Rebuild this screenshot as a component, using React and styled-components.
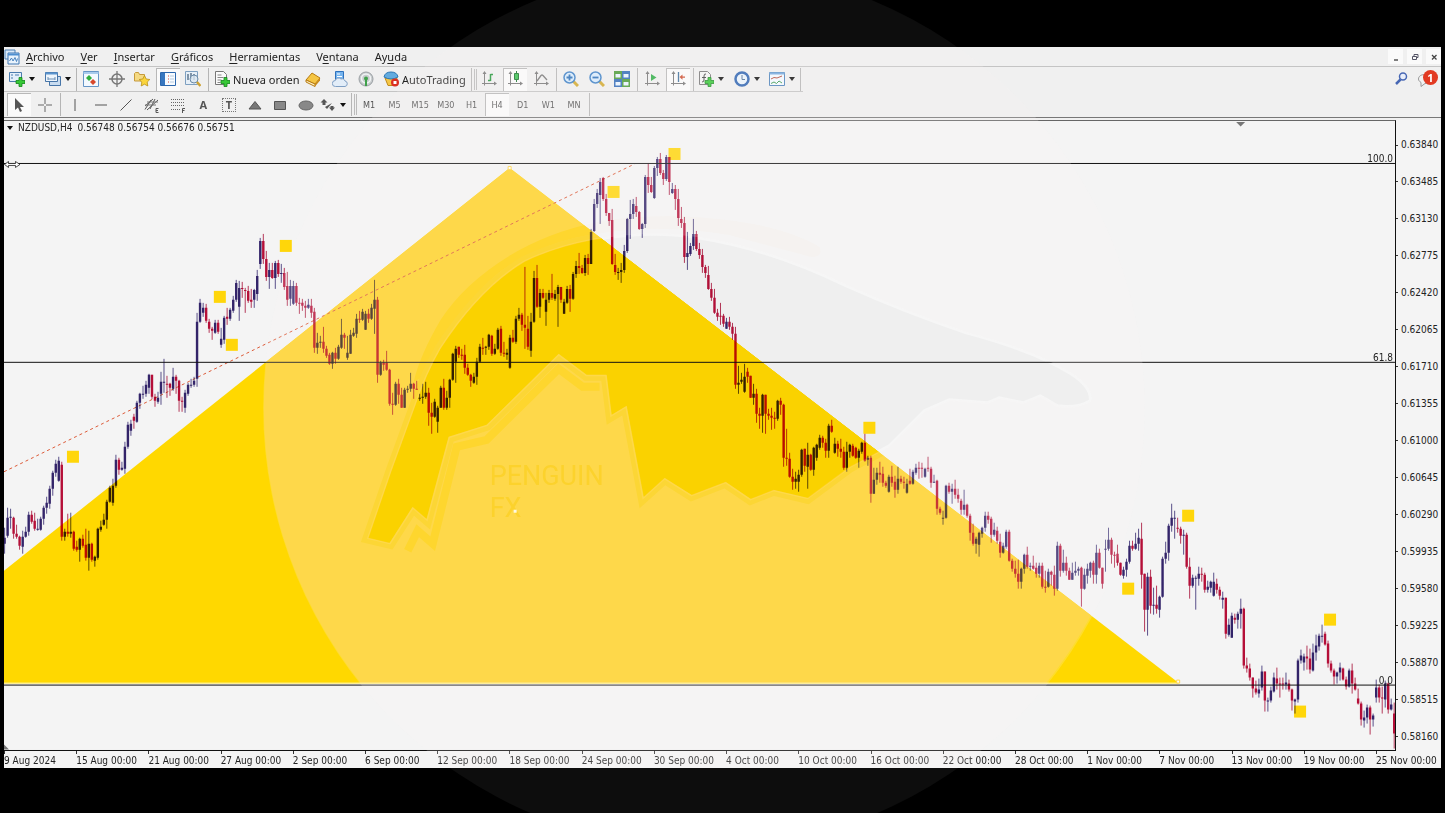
import styled, { createGlobalStyle, css } from "styled-components";

// one candle per entry: high, open, close, low (chart units)
const CANDLES = `
527,543,537,553 507,535,517,537 508,517,516,528 516,517,533,538 524,533,536,538 535,536,545,549 530,546,536,553 526,536,531,537
511,531,514,535 510,514,521,523 512,520,528,530 518,529,528,530 516,529,518,530 505,518,507,524 496,507,502,513 485,503,488,508
470,488,472,495 459,472,463,476 456,480,460,481 461,464,536,540 528,536,531,540 513,531,533,536 512,533,531,537 530,531,548,550
540,546,549,551 537,549,538,561 534,538,545,547 528,544,557,560 530,557,543,570 542,543,559,561 555,560,556,566 527,557,528,559
520,529,526,531 513,524,519,525 499,519,501,528 485,501,487,502 478,502,485,505 454,485,459,487 457,459,469,474 461,469,467,470
441,468,446,473 421,446,424,448 419,430,423,435 413,416,420,428 400,421,402,422 392,402,393,408 385,394,393,398 380,393,384,396
373,387,374,393 374,374,396,398 393,396,400,406 391,401,397,403 371,393,381,404 358,382,381,392 375,383,384,397 382,383,387,395
367,388,376,390 374,376,380,393 379,380,400,411 396,400,400,411 389,407,392,412 382,393,384,395 378,385,384,387 376,384,380,386
312,378,321,386 298,321,302,322 302,312,307,316 303,307,320,322 318,321,328,332 326,328,330,339 319,332,322,333 319,322,331,333
327,344,338,347 315,339,317,343 307,316,318,324 307,318,309,320 295,310,299,312 279,299,282,301 280,306,287,320 281,287,288,297
287,289,290,312 285,290,300,302 288,299,301,307 288,299,289,307 269,293,275,300 237,263,240,268 233,240,258,263 250,258,276,280
262,276,269,288 262,269,277,278 260,277,262,288 259,262,273,276 263,273,272,282 267,272,286,289 271,285,299,305 279,298,285,305
280,303,285,304 282,285,302,305 297,302,303,313 298,302,305,310 300,305,307,317 298,307,304,308 298,305,312,317 307,311,347,352
332,347,342,353 335,342,341,347 326,341,348,352 345,348,355,357 352,354,363,364 351,363,352,368 347,352,358,363 344,358,346,359
318,347,334,348 332,334,337,348 335,357,352,359 329,353,334,353 327,335,332,336 313,333,318,337 310,318,318,322 308,319,311,320
310,329,313,329 308,313,318,322 303,318,307,319 279,308,299,333 296,299,374,382 360,374,362,375 359,362,364,370 350,362,369,370
368,369,403,405 392,403,404,414 381,404,383,405 378,383,394,403 387,394,407,407 387,407,389,407 385,389,388,392 372,388,383,391
382,383,388,398 380,388,389,389 393,398,397,400 383,397,396,403 381,396,392,398 387,392,412,425 402,412,416,433 398,416,401,417
405,421,407,432 385,407,387,407 378,387,407,409 390,407,397,409 378,397,379,407 352,379,353,380 345,361,348,382 346,346,354,357
348,354,355,359 344,354,367,373 363,367,374,375 373,374,380,386 372,382,376,383 357,376,361,384 343,361,346,362 337,347,348,354
345,347,346,354 333,346,334,349 334,335,353,355 343,353,348,354 327,348,329,349 325,328,352,355 341,352,353,356 348,354,352,359
334,367,337,368 329,337,341,342 315,341,318,343 307,318,314,320 312,314,324,330 266,324,327,348 315,328,346,349 312,350,321,356
270,321,277,322 264,277,306,307 288,306,292,317 288,292,297,298 292,311,299,325 289,299,292,302 273,292,297,299 289,298,293,300
284,293,286,326 286,286,299,302 298,313,301,313 285,302,288,303 284,288,298,311 271,298,273,299 260,273,265,277 252,265,267,273
264,267,272,273 254,272,257,275 253,257,263,274 228,263,231,263 198,230,203,231 188,203,192,207 177,194,181,223 176,177,198,200
193,198,212,215 212,212,220,225 208,219,263,264 253,264,271,274 267,272,271,279 262,271,269,282 244,269,250,272 217,250,218,252
199,218,213,238 198,213,203,218 196,205,211,216 210,211,228,229 222,228,223,237 174,223,176,227 162,176,184,192 176,184,191,192
165,197,167,198 156,167,158,175 152,158,172,174 169,172,178,184 154,178,156,180 156,156,181,194 182,192,188,193 184,188,198,209
188,198,217,225 206,218,222,227 216,222,256,262 231,256,252,269 242,253,245,255 218,245,233,249 230,233,248,250 242,248,254,258
248,254,266,272 264,266,272,277 265,274,288,289 282,288,297,300 288,297,312,313 308,312,316,320 302,315,316,324 313,315,323,326
317,328,321,328 316,321,326,329 322,326,333,339 326,333,384,388 365,384,382,393 372,381,379,383 363,391,376,392 367,371,376,382
375,375,397,397 383,397,393,404 388,393,413,422 407,413,415,428 393,415,394,432 394,394,413,433 408,413,415,419 407,415,417,429
411,417,418,428 399,418,400,420 397,400,404,414 403,404,457,466 428,457,458,465 452,458,476,477 468,476,481,489 471,481,478,488
469,481,474,491 448,474,449,476 448,448,465,471 442,466,454,488 453,454,469,470 446,469,447,475 443,457,444,460 434,447,437,449
435,437,442,447 438,442,450,457 423,450,425,457 419,425,431,432 437,452,443,453 440,443,448,456 438,448,451,457 446,451,467,469
441,467,451,471 443,451,444,457 443,445,455,456 446,447,457,458 448,457,450,467 441,451,442,453 433,442,460,461 455,459,457,465
455,457,493,502 467,493,479,493 467,479,472,484 461,472,474,482 466,473,482,486 480,482,485,487 474,491,476,492 465,476,482,486
475,481,489,497 466,489,478,493 475,478,481,483 476,481,482,488 478,492,483,493 468,480,483,484 469,483,471,484 463,472,467,474
461,467,467,478 462,467,468,477 467,476,468,477 456,467,468,471 466,468,482,487 474,482,481,482 479,480,508,514 506,508,512,514
510,518,517,524 484,517,485,518 482,485,491,493 483,491,488,503 479,488,494,498 488,494,498,502 498,500,509,514 489,509,504,514
503,504,515,517 513,515,532,540 523,532,543,545 536,543,538,553 531,544,532,556 526,533,527,537 511,527,515,531 511,515,519,523
516,518,534,542 522,534,529,536 526,530,540,543 533,541,552,557 542,552,545,553 529,546,531,548 529,531,560,561 558,560,568,571
560,568,573,577 559,573,581,588 567,581,568,588 553,568,554,573 546,554,566,568 562,566,565,570 555,565,568,569 562,567,573,577
562,573,565,577 562,565,586,588 570,586,586,592 568,586,571,587 570,571,574,585 565,574,588,595 541,588,545,590 543,545,570,576
549,570,562,572 556,562,570,575 567,570,579,579 562,579,572,579 561,572,570,575 566,570,568,575 566,567,588,606 568,588,574,589
563,575,568,583 561,570,562,577 560,562,574,583 544,574,552,583 548,552,567,568 567,567,583,588 539,549,548,571 527,548,539,550
537,539,554,563 551,554,554,567 544,553,562,565 562,562,574,575 566,575,569,578 558,569,561,576 540,561,545,563 540,545,548,550
532,548,543,549 528,543,537,550 522,538,574,588 573,573,609,631 572,609,576,635 569,576,605,613 587,605,604,614 585,604,608,613
595,609,596,617 556,596,558,597 541,558,552,563 523,552,525,560 503,525,517,531 510,518,517,538 517,527,528,532 526,528,535,543
529,535,534,554 532,534,566,568 557,566,585,598 574,585,577,587 575,578,577,609 566,578,573,585 567,573,574,581 572,574,589,592
580,589,586,592 580,587,581,592 572,595,581,596 578,583,589,593 586,589,595,599 591,599,597,608 597,597,633,638 618,634,624,636
612,637,615,637 613,617,619,623 611,619,613,628 598,613,608,628 607,608,665,668 657,665,668,672 663,668,677,680 677,677,688,697
680,688,692,694 678,693,689,697 665,687,671,690 671,671,700,711 697,701,700,711 686,700,690,702 672,691,677,692 667,678,683,689
677,683,683,697 677,683,684,689 672,684,682,689 679,683,689,691 688,689,700,710 698,701,699,713 658,699,660,702 649,660,655,663
653,662,656,670 645,656,658,669 648,658,669,673 643,670,652,671 634,652,645,660 633,646,635,650 624,636,635,642 631,633,644,645
640,643,663,667 660,663,670,672 668,670,676,684 671,676,672,683 662,672,667,680 667,668,679,680 676,679,686,689 668,686,670,687
663,670,683,693 677,683,689,690 688,698,703,704 701,703,719,725 710,720,717,727 704,717,707,723 705,707,719,734 713,719,715,726
679,697,687,702 684,687,697,702 686,697,698,713 680,699,683,707 682,683,709,713 698,709,704,710 702,713,733,748`
  .trim()
  .split(/\s+/)
  .map((entry) => entry.split(",").map(Number));

const candlePaths = CANDLES.reduce(
  (paths, [high, open, close, low], i) => {
    const x = 4.6 + i * 3.01;
    const key = close < open ? "up" : "down";
    const top = Math.min(open, close);
    const height = Math.max(Math.abs(close - open), 1);
    paths[key].wicks += `M${x.toFixed(1)} ${high}V${low}`;
    paths[key].bodies += `M${(x - 1.2).toFixed(1)} ${top}h2.4v${height}h-2.4z`;
    return paths;
  },
  { up: { wicks: "", bodies: "" }, down: { wicks: "", bodies: "" } }
);

const PRICES = Array.from({ length: 17 }, (_, i) =>
  (0.6384 - i * 0.00355).toFixed(5)
);

const DATES = [
  "9 Aug 2024",
  "15 Aug 00:00",
  "21 Aug 00:00",
  "27 Aug 00:00",
  "2 Sep 00:00",
  "6 Sep 00:00",
  "12 Sep 00:00",
  "18 Sep 00:00",
  "24 Sep 00:00",
  "30 Sep 00:00",
  "4 Oct 00:00",
  "10 Oct 00:00",
  "16 Oct 00:00",
  "22 Oct 00:00",
  "28 Oct 00:00",
  "1 Nov 00:00",
  "7 Nov 00:00",
  "13 Nov 00:00",
  "19 Nov 00:00",
  "25 Nov 00:00",
];

const MARKERS = [
  [73, 456],
  [220, 296],
  [232, 344],
  [286, 245],
  [614, 191],
  [675, 153],
  [870, 427],
  [1189, 515],
  [1129, 588],
  [1331, 619],
  [1301, 711],
];

// [before, access key, after]
const MENU = [
  ["", "A", "rchivo"],
  ["", "V", "er"],
  ["", "I", "nsertar"],
  ["", "G", "ráficos"],
  ["", "H", "erramientas"],
  ["V", "e", "ntana"],
  ["Ay", "u", "da"],
];

const TIMEFRAMES = ["M1", "M5", "M15", "M30", "H1", "H4", "D1", "W1", "MN"];

const BODY =
  "M369 537L392 470L415 407Q427 372 441 348Q480 288 525 261Q556 246 594 239Q650 229 700 237Q770 248 847 285Q905 311 967 332Q1035 350 1070 372Q1093 386 1091 400Q1078 408 1058 405L1041 395L1024 402L1000 397L988 402L950 399L925 410L890 445L850 466L808 497L774 489L751 498L726 481L692 494L665 477L644 496L627 405L612 414L607 374L587 374L559 353L487 424L449 436L427 518L413 506L390 542Z";
const BAND =
  "M414 381Q420 355 441 319Q466 280 518 250Q560 227 610 219Q670 211 735 220Q790 228 820 246Q824 256 812 256Q770 245 730 234Q660 222 595 233Q540 242 500 271Q455 308 432 372Z";
const TRIANGLE = "4,683 4,570 510,167 1179,682 1179,683";

/* ---------- icons ---------- */

const Axes = ({ children }) => (
  <>
    <path d="M3.5 1v13.5M1 12.5h14" stroke="#777" fill="none" />
    <path d="M3.5 0l-2 3h4zM16 12.5l-3-2v4z" fill="#777" />
    {children}
  </>
);

const Plus = () => (
  <path
    d="M10 6.500h3v3h3v3h-3v3h-3v-3h-3v-3h3z"
    fill="#37c837"
    stroke="#13851b"
    strokeWidth=".8"
  />
);

const ICONS = {
  app: (
    <>
      <path d="M1 1h10v9H1z" fill="#dbeaf8" stroke="#4d80b5" />
      <path d="M4 4h11v11H4z" fill="#e9f3fc" stroke="#3f77b3" />
      <path d="M4 5.500h11" stroke="#4d8fd0" strokeWidth="2" />
      <path d="M5.500 12l2-3 1.500 3 2-3.500 1.500 4 1-3" fill="none" stroke="#4983bf" />
    </>
  ),
  newChart: (
    <>
      <path d="M.5 1.500h12v9H.5z" fill="#e3effa" stroke="#4b7cae" />
      <path d="M2 4h2M2 7h2M6 4h4" stroke="#4b7cae" />
      <Plus />
    </>
  ),
  profiles: (
    <>
      <path d="M4.500 5.500h11v9h-11z" fill="#c9dcf0" stroke="#4775a8" />
      <path d="M.5 1.500h12v9H.5z" fill="#eef5fc" stroke="#4775a8" />
      <path d="M.5 2.500h12" stroke="#5b94ce" strokeWidth="2" />
      <path d="M3 8h7M3 6v3M10 6v3" stroke="#6b8fb5" />
    </>
  ),
  market: (
    <>
      <path d="M.5.5h15v15H.5z" fill="#f3f9ff" stroke="#6595c6" />
      <path d="M.5 2h15" stroke="#a9cbed" strokeWidth="2" />
      <path d="M6 4l3 3-3 3-3-3z" fill="#2fae3c" />
      <path d="M10 8l3 3-3 3-3-3z" fill="#d8482b" />
    </>
  ),
  dataWindow: (
    <>
      <circle cx="8" cy="8" r="5" fill="none" stroke="#777" strokeWidth="1.500" />
      <path d="M8 0v16M0 8h16" stroke="#777" strokeWidth="1.300" />
    </>
  ),
  favorites: (
    <>
      <path d="M.5 2.500V10h10V3.500H5.500L4.500 1.500h-3z" fill="#f5da83" stroke="#c69a3c" />
      <path
        d="M10.500 4.500l1.700 3.500 3.600.5-2.600 2.600.6 3.900-3.300-1.800-3.300 1.800.6-3.900-2.600-2.600 3.600-.5z"
        fill="#fbd53c"
        stroke="#b8901c"
        strokeWidth=".8"
      />
    </>
  ),
  navigator: (
    <>
      <path d="M.5 1.500h15v13H.5z" fill="#f7fbff" stroke="#2d68ae" />
      <path d="M1 2h4v12H1z" fill="#3877bf" />
      <path d="M8 5h1M8 8h1M8 11h1" stroke="#d64a35" />
      <path d="M10 5h4M10 8h4M10 11h4" stroke="#b6cbe0" />
    </>
  ),
  tester: (
    <>
      <path d="M.5.5h12v13H.5z" fill="#e6eff7" stroke="#7d9fc0" />
      <path d="M3 3v6M6 2v6M9 3v6" stroke="#5f7890" strokeWidth="1.500" />
      <circle cx="9" cy="8" r="4" fill="#d9e6f0" fillOpacity=".8" stroke="#6c8ba8" />
      <path d="M12 11l3.500 4" stroke="#cda233" strokeWidth="2.500" />
    </>
  ),
  order: (
    <>
      <path d="M1.500.5h8l3 3v10h-11z" fill="#fafafa" stroke="#777" />
      <path d="M3.500 4h4M3.500 6.500h6M3.500 9h4M3.500 11.500h3" stroke="#888" />
      <Plus />
    </>
  ),
  editor: (
    <>
      <path d="M1 9l6-7 8 5-5 6z" fill="#f5c542" stroke="#b77b12" />
      <path d="M1 9v2l9 4.500V13z" fill="#fff1c4" stroke="#b77b12" />
      <path d="M10 13l5-6v2.500l-5 6z" fill="#c98b1a" />
    </>
  ),
  cloud: (
    <>
      <path d="M3.500.5h8v9h-8z" fill="#76b4ee" stroke="#2f72bd" />
      <path d="M5 3h3M5 5.500h5" stroke="#fff" />
      <path
        d="M3.500 15.500a3 3 0 0 1-.3-6 3.500 3.500 0 0 1 5.800-1.500 3 3 0 0 1 4 2 2.800 2.800 0 0 1 0 5.500z"
        fill="#e2edf8"
        stroke="#7f9fc4"
      />
    </>
  ),
  signals: (
    <>
      <circle cx="8" cy="8" r="7" fill="#c7cbcd" stroke="#9a9fa3" />
      <circle cx="8" cy="7.500" r="4.500" fill="none" stroke="#f0f3f4" strokeWidth="1.500" />
      <circle cx="8" cy="7.500" r="2" fill="#3fa14a" />
      <path d="M8 8v7" stroke="#3fa14a" strokeWidth="2" />
    </>
  ),
  auto: (
    <>
      <path d="M2 7h12l-3 7.500H5z" fill="#f5c746" stroke="#c08a1c" />
      <path d="M1 6q1-5 7-5t7 5q-7 4-14 0z" fill="#62abdf" stroke="#2c76b4" />
      <circle cx="12" cy="11.500" r="4" fill="#da3022" />
      <path d="M10.500 10h3v3h-3z" fill="#fff" />
    </>
  ),
  bars: (
    <Axes>
      <path d="M9.500 3v7M12 3.500H9.500M7 9.500h2.500" fill="none" stroke="#23963a" strokeWidth="1.500" />
    </Axes>
  ),
  candles: (
    <Axes>
      <path d="M9.500 0v11" stroke="#16742a" />
      <path d="M7.500 2.500h4v6h-4z" fill="#38c24f" stroke="#16742a" />
    </Axes>
  ),
  line: (
    <Axes>
      <path d="M4 10l4-5.500q1-1 2 0l4 4.500" fill="none" stroke="#777" strokeWidth="1.300" />
    </Axes>
  ),
  zoomIn: (
    <>
      <path d="M10 10l5 5" stroke="#d2a92e" strokeWidth="3" />
      <circle cx="6.500" cy="6.500" r="5.500" fill="#d8ecfd" stroke="#3e80c6" strokeWidth="1.500" />
      <path d="M6.500 3.500v6M3.500 6.500h6" stroke="#2b6fb8" strokeWidth="1.800" />
    </>
  ),
  zoomOut: (
    <>
      <path d="M10 10l5 5" stroke="#d2a92e" strokeWidth="3" />
      <circle cx="6.500" cy="6.500" r="5.500" fill="#d8ecfd" stroke="#3e80c6" strokeWidth="1.500" />
      <path d="M3.500 6.500h6" stroke="#2b6fb8" strokeWidth="1.800" />
    </>
  ),
  tile: (
    <>
      <path d="M0 0h8v8H0zM8 8h8v8H8z" fill="#4a9a35" />
      <path d="M8 0h8v8H8zM0 8h8v8H0z" fill="#3069b7" />
      <path d="M1.500 3h5v3.500h-5zM9.500 3h5v3.500h-5zM1.500 11h5v3.500h-5zM9.500 11h5v3.500h-5z" fill="#eaf5ff" />
    </>
  ),
  scroll: (
    <Axes>
      <path d="M7 3l5.500 3.500L7 10z" fill="#2fae46" />
    </Axes>
  ),
  shift: (
    <Axes>
      <path d="M8.500 1v10" stroke="#3d6e9c" strokeWidth="1.300" />
      <path d="M9.500 6l3-2.500v2H15v1.200h-2.500v2z" fill="#cc4a2b" />
    </Axes>
  ),
  indicators: (
    <>
      <path d="M1.500.5h8l3 3v10h-11z" fill="#f5f5f5" stroke="#777" />
      <path d="M8 3q-2-.5-2 2v4q0 2-2 2M4 6.500h4" fill="none" stroke="#444" />
      <Plus />
    </>
  ),
  clock: (
    <>
      <circle cx="8" cy="8" r="6.500" fill="#eaf3fc" stroke="#2c62b0" strokeWidth="2.500" />
      <path d="M8 4v4.500h3" fill="none" stroke="#4a6d95" />
    </>
  ),
  template: (
    <>
      <path d="M.5 1.500h15v13H.5z" fill="#f3f9ff" stroke="#4c82ba" />
      <path d="M.5 2.500h15" stroke="#73a8dd" strokeWidth="2" />
      <path d="M2 8l3-1.500 3 .5 5-2" fill="none" stroke="#b34a38" />
      <path d="M2 12.500l3-1.500 2.500 1.500 2.500-2.500 3 2" fill="none" stroke="#3a9a4f" />
    </>
  ),
  cursor: <path d="M4 1v12l3-2.500L9 15l2-1-2-4h4z" fill="#555" />,
  cross: <path d="M8 1v6M8 9v6M1 8h6M9 8h6" stroke="#666" />,
  vline: <path d="M8 2v12" stroke="#555" />,
  hline: <path d="M2 8h12" stroke="#555" />,
  trend: <path d="M2.500 13.500l11-11" stroke="#555" />,
  channel: (
    <>
      <path d="M1 9l8-7M3 13L14 3M1 12.500L7 3M6 12l5-10" stroke="#555" />
      <path d="M1 8h11M3 5h11" stroke="#777" />
      <path d="M14.500 11.500H12v4h2.500M12 13.500h2" fill="none" stroke="#555" />
    </>
  ),
  fibo: (
    <>
      <path d="M1 2.500h14M1 5.500h14M1 8.500h14M1 12.500h9" stroke="#666" strokeDasharray="1 1" />
      <path d="M12.500 16v-4.500H15M12.500 13.500h2" fill="none" stroke="#555" />
    </>
  ),
  label: <path d="M2.500 1.500h12v13h-12z" fill="none" stroke="#888" strokeDasharray="1 1" />,
  triangle: <path d="M8 4.500l6 7.500H2z" fill="#777" stroke="#555" />,
  rect: <path d="M2.500 4.500h11v8h-11z" fill="#888" stroke="#555" />,
  ellipse: <ellipse cx="8" cy="8.500" rx="7" ry="4.500" fill="#888" stroke="#666" />,
  arrows: (
    <path
      d="M4 2l3.500 3.500H5.500V8h-3V5.500H.5zM5 10l2 2 5-6M12 14l-3-3.500h1.500V9h3v1.500H15z"
      fill="#555"
    />
  ),
  search: (
    <>
      <circle cx="10" cy="5.500" r="3.500" fill="#e9eefa" stroke="#4767b4" strokeWidth="1.500" />
      <path d="M7.500 8.500L3 13" stroke="#4767b4" strokeWidth="2.500" />
    </>
  ),
  chat: (
    <path
      d="M8 3.500c4 0 6.500 1.800 6.500 4.500S12 12.500 8 12.500l-4 3v-4C2.500 10.500 1.500 9.500 1.500 8 1.500 5.300 4 3.500 8 3.500z"
      fill="#f2f2f2"
      stroke="#999"
    />
  ),
};

const Icon = ({ name, size = 16 }) => (
  <svg width={size} height={size} viewBox="0 0 16 16" aria-hidden="true">
    {ICONS[name]}
  </svg>
);

const Tool = ({ name, label, pressed }) => (
  <ToolButton type="button" aria-label={label || name} $pressed={pressed}>
    <Icon name={name} />
  </ToolButton>
);

const SplitTool = ({ name }) => (
  <SplitButton type="button" aria-label={name}>
    <Icon name={name} />
    <Caret />
  </SplitButton>
);

/* ---------- chart ---------- */

const Chart = () => (
  <Plot viewBox="4 120 1392 629" role="img" aria-label="NZDUSD H4">
    <defs>
      <clipPath id="triangle">
        <polygon points={TRIANGLE} />
      </clipPath>
      <clipPath id="disc">
        <circle cx="704" cy="407" r="440" />
      </clipPath>
    </defs>

    <rect x="4" y="120" width="1392" height="629" fill="#f4f4f4" />
    <path d={BODY} fill="#efefef" stroke="#f6f6f6" strokeWidth="3" />
    <path d={BAND} fill="#f4f2ef" />

    <polygon points={TRIANGLE} fill="#ffd800" />
    <g clipPath="url(#triangle)">
      <circle cx="704" cy="407" r="440" fill="#ffd225" />
      <path d={BAND} fill="#ffd003" />
      <path d={BODY} fill="#fad200" stroke="#fdd00c" strokeWidth="12" />
      <path d={BODY} fill="#fad200" stroke="#ffd225" strokeWidth="3" />
      <path d={BODY} fill="#fad200" />
      <path
        d="M408 550L418 530L433 543L457 446L487 439L559 368L583 386L600 386"
        fill="none"
        stroke="#ffd003"
        strokeWidth="8"
      />
      <Watermark x="490" y="484">
        PENGUIN
      </Watermark>
      <Watermark x="490" y="516">
        FX
      </Watermark>
    </g>
    <rect x="514" y="509" width="3" height="3" fill="#fffbe0" />

    <path d="M4 471L635 163" stroke="#dc5a38" strokeDasharray="3 3" />

    {MARKERS.map(([x, y]) => (
      <rect key={`${x}-${y}`} x={x - 6} y={y - 6} width="12" height="12" fill="#ffd60a" />
    ))}

    <Candles>
      <path d={candlePaths.up.wicks} stroke="#5d5390" />
      <path d={candlePaths.down.wicks} stroke="#bd3a5c" />
      <path d={candlePaths.up.bodies} fill="#35256e" />
      <path d={candlePaths.down.bodies} fill="#bd0f3a" />
    </Candles>

    <path d="M4 162.500H1396M4 361.500H1396M4 684.500H1396" stroke="#111" />
    <path d="M4 682.500H1179" stroke="#fff3a0" />
    <path d="M508.500 165.500h3v3h-3zM1177.500 679.500h3v3h-3z" fill="#fff" stroke="#ffd64a" />
    <FibLabel x="1394" y="161">100.0</FibLabel>
    <FibLabel x="1394" y="360">61.8</FibLabel>
    <FibLabel x="1394" y="683">0.0</FibLabel>

    <path d="M1237 121h9l-4.500 4.500z" fill="#777" />
    <path d="M4 744l5 5H4z" fill="#777" />
    <path
      d="M4.500 163.500l4-3v2h7v-2l4.500 3-4.500 3v-2h-7v2z"
      fill="#fff"
      stroke="#222"
      strokeWidth=".8"
    />
  </Plot>
);

function App() {
  return (
    <Page>
      <GlobalStyle />
      <Layer viewBox="0 0 1445 813" preserveAspectRatio="xMidYMid slice" aria-hidden="true">
        <circle cx="704" cy="407" r="440" fill="#0d0d0d" />
      </Layer>

      <Terminal>
        <MenuBar>
          <Icon name="app" />
          <Menu>
            {MENU.map(([before, key, after]) => (
              <MenuItem type="button" key={before + key + after}>
                {before}
                <u>{key}</u>
                {after}
              </MenuItem>
            ))}
          </Menu>
          <WindowButtons>
            <WindowButton type="button" aria-label="Minimizar">
              <svg width="12" height="12" viewBox="0 0 12 12">
                <path d="M4 9h4" stroke="#555" strokeWidth="1.500" />
              </svg>
            </WindowButton>
            <WindowButton type="button" aria-label="Restaurar">
              <svg width="12" height="12" viewBox="0 0 12 12">
                <path d="M3.500 5.500h4v3h-4zM5 5V3.500h4v3H8" fill="none" stroke="#556" />
              </svg>
            </WindowButton>
            <WindowButton type="button" aria-label="Cerrar">
              <svg width="12" height="12" viewBox="0 0 12 12">
                <path d="M4 4l4.500 4.500M8.500 4L4 8.500" stroke="#444" strokeWidth="1.300" />
              </svg>
            </WindowButton>
          </WindowButtons>
        </MenuBar>

        <Toolbars>
          <Toolbar>
            <Group $width={66}>
              <SplitTool name="newChart" />
              <SplitTool name="profiles" />
            </Group>
            <Separator />
            <Group $width={126}>
              <Tool name="market" />
              <Tool name="dataWindow" />
              <Tool name="favorites" />
              <Tool name="navigator" pressed />
              <Tool name="tester" />
            </Group>
            <Separator />
            <Group $width={257}>
              <TextButton type="button">
                <Icon name="order" />
                Nueva orden
              </TextButton>
              <Tool name="editor" />
              <Tool name="cloud" />
              <Tool name="signals" />
              <TextButton type="button">
                <Icon name="auto" />
                AutoTrading
              </TextButton>
            </Group>
            <Separator />
            <Grip />
            <Group $width={76}>
              <Tool name="bars" />
              <Tool name="candles" pressed />
              <Tool name="line" />
            </Group>
            <Separator />
            <Group $width={75}>
              <Tool name="zoomIn" />
              <Tool name="zoomOut" />
              <Tool name="tile" />
            </Group>
            <Separator />
            <Group $width={50}>
              <Tool name="scroll" />
              <Tool name="shift" pressed />
            </Group>
            <Separator />
            <Group $width={101}>
              <SplitTool name="indicators" />
              <SplitTool name="clock" />
              <SplitTool name="template" />
            </Group>
            <Separator />
          </Toolbar>

          <Toolbar>
            <Group $width={50}>
              <Tool name="cursor" pressed />
              <Tool name="cross" />
            </Group>
            <Separator />
            <Group $width={255}>
              <Tool name="vline" />
              <Tool name="hline" />
              <Tool name="trend" />
              <Tool name="channel" />
              <Tool name="fibo" />
              <LetterButton type="button">A</LetterButton>
              <LetterButton type="button" $dotted>
                T
              </LetterButton>
              <Tool name="triangle" />
              <Tool name="rect" />
              <Tool name="ellipse" />
            </Group>
            <Group $width={30}>
              <SplitTool name="arrows" />
            </Group>
            <Separator />
            <Grip />
            <Group $width={229}>
              {TIMEFRAMES.map((frame) => (
                <Timeframe type="button" key={frame} $pressed={frame === "H4"}>
                  {frame}
                </Timeframe>
              ))}
            </Group>
            <Separator />
          </Toolbar>

          <Corner>
            <Tool name="search" />
            <Notifications type="button" aria-label="Mensajes">
              <Icon name="chat" />
              <Badge>1</Badge>
            </Notifications>
          </Corner>
        </Toolbars>

        <ChartArea>
          <ChartTitle>
            <Caret />
            <span>NZDUSD,H4</span>
            <span>0.56748 0.56754 0.56676 0.56751</span>
          </ChartTitle>
          <Chart />
          <PriceAxis>
            {PRICES.map((price) => (
              <li key={price}>{price}</li>
            ))}
          </PriceAxis>
        </ChartArea>
        <TimeAxis>
          {DATES.map((date) => (
            <li key={date}>{date}</li>
          ))}
        </TimeAxis>
      </Terminal>

      <Layer viewBox="0 0 1445 813" preserveAspectRatio="xMidYMid slice" aria-hidden="true">
        <clipPath id="window">
          <rect x="4" y="47" width="1437" height="719" />
        </clipPath>
        <path
          d={`M264 407a440 440 0 1 0 880 0a440 440 0 1 0-880 0z${BODY}`}
          clipPath="url(#window)"
          fill="#f8f4f4"
          fillOpacity=".18"
          fillRule="evenodd"
        />
      </Layer>
    </Page>
  );
}

const GlobalStyle = createGlobalStyle`
  * {
    box-sizing: border-box;
  }

  body {
    margin: 0;
    background: #000;
  }

  button {
    margin: 0;
    padding: 0;
    border: 0;
    background: none;
    color: inherit;
    font: inherit;
  }

  svg {
    display: block;
    flex-shrink: 0;
  }
`;

const Page = styled.div`
  position: relative;
  min-height: 100vh;
  padding: 47px 4px;
  overflow: hidden;
  background: #000;
  font-family: "Noto Sans", sans-serif;
`;

const Layer = styled.svg`
  position: absolute;
  inset: 0;
  width: 100%;
  height: 100%;
  pointer-events: none;
`;

const Terminal = styled.main`
  position: relative;
  background: #f0f0f0;
  color: #222;
  font-size: 12px;
`;

const MenuBar = styled.header`
  display: flex;
  align-items: center;
  height: 20px;
  border-bottom: 1px solid #c4c4c4;
`;

const Menu = styled.nav`
  display: flex;
  gap: 16px;
  margin-left: 6px;
`;

const MenuItem = styled.button`
  font-size: 11px;
  line-height: 18px;

  u {
    text-underline-offset: 2px;
  }
`;

const WindowButtons = styled.div`
  display: flex;
  gap: 4px;
  margin-left: auto;
`;

const WindowButton = styled.button`
  display: grid;
  place-items: center;
  width: 15px;
  height: 15px;
  background: #fafafa;
`;

const Toolbars = styled.div`
  position: relative;
  height: 51px;
  border-bottom: 1px solid #777;
`;

const Toolbar = styled.div`
  display: flex;
  align-items: center;
  width: max-content;
  height: 25px;
  padding-left: 3px;
  border-bottom: 1px solid #c4c4c4;

  & + & {
    border-bottom: 0;
  }
`;

const Group = styled.div`
  display: flex;
  align-items: center;
  justify-content: space-between;
  width: ${({ $width }) => $width}px;
`;

const Separator = styled.span`
  width: 1px;
  height: 23px;
  margin: 0 2px 0 3px;
  background: #b5b5b5;
`;

const Grip = styled.span`
  width: 3px;
  height: 21px;
  border: solid #bbb;
  border-width: 0 1px;
`;

const pressedLook = css`
  background: #fafafa;
  box-shadow: inset 1px 1px #b8b8b8;
`;

const ToolButton = styled.button`
  display: grid;
  place-items: center;
  width: 24px;
  height: 23px;
  ${({ $pressed }) => $pressed && pressedLook}
`;

const Caret = styled.span`
  border: solid transparent;
  border-width: 4px 3px 0;
  border-top-color: #111;
`;

const SplitButton = styled.button`
  display: flex;
  align-items: center;
  gap: 4px;
  width: 30px;
  height: 23px;
  padding-left: 2px;
`;

const TextButton = styled.button`
  display: flex;
  align-items: center;
  gap: 3px;
  width: 88px;
  height: 23px;
  padding-left: 3px;
  font-size: 11px;
  white-space: nowrap;
`;

const Timeframe = styled(ToolButton)`
  color: #555;
  font-family: "DejaVu Sans Condensed", "DejaVu Sans", sans-serif;
  font-size: 9px;
`;

const LetterButton = styled.button`
  width: 14px;
  height: 14px;
  margin: 0 5px;
  border: ${({ $dotted }) => ($dotted ? "1px dotted #777" : "0")};
  color: #555;
  font-size: 11px;
  font-weight: 700;
  line-height: 12px;
`;

const Corner = styled.div`
  display: flex;
  align-items: center;
  position: absolute;
  top: 0;
  right: 4px;
`;

const Notifications = styled(ToolButton)`
  position: relative;
`;

const Badge = styled.span`
  position: absolute;
  top: 3px;
  right: -1px;
  width: 15px;
  height: 15px;
  border-radius: 50%;
  background: #e23a22;
  color: #fff;
  font-size: 11px;
  font-weight: 700;
  line-height: 15px;
  text-align: center;
`;

const ChartArea = styled.section`
  display: grid;
  grid-template-columns: 1fr 45px;
  position: relative;
  margin-top: 2px;
  font-family: "DejaVu Sans Condensed", "DejaVu Sans", sans-serif;
  font-size: 10px;
`;

const ChartTitle = styled.h1`
  display: flex;
  align-items: center;
  gap: 5px;
  position: absolute;
  top: 2px;
  left: 3px;
  margin: 0;
  font-size: 10px;
  font-weight: 400;
  line-height: 12px;
`;

const Plot = styled.svg`
  width: 100%;
  height: auto;
  border-top: 1px solid #666;
  border-right: 1px solid #111;
  border-bottom: 1px solid #111;
`;

const Candles = styled.g`
  mix-blend-mode: multiply;
`;

const Watermark = styled.text`
  fill: #fdcb00;
  font-family: Roboto, sans-serif;
  font-size: 27px;
`;

const FibLabel = styled.text`
  fill: #222;
  font-size: 10px;
  text-anchor: end;
`;

const PriceAxis = styled.ul`
  display: flex;
  flex-direction: column;
  justify-content: space-between;
  margin: 0;
  padding: 19px 0 8px;
  background: #f4f4f4;
  list-style: none;

  li {
    display: flex;
    align-items: center;
    gap: 3px;
    line-height: 12px;
  }

  li::before {
    content: "";
    width: 2px;
    height: 1px;
    background: #333;
  }
`;

const TimeAxis = styled.ol`
  display: grid;
  grid-template-columns: repeat(19, 1fr) 65px;
  margin: 0;
  padding: 0;
  background: #f4f4f4;
  font-family: "DejaVu Sans Condensed", "DejaVu Sans", sans-serif;
  font-size: 10px;
  list-style: none;

  li {
    min-width: 0;
    line-height: 14px;
    white-space: nowrap;
  }

  li::before {
    content: "";
    display: block;
    width: 1px;
    height: 3px;
    background: #333;
  }
`;

export default App;
